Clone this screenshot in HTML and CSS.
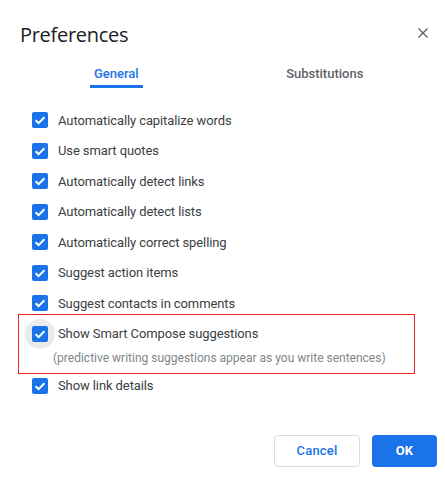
FILE: index.html
```html
<!DOCTYPE html>
<html>
<head>
<meta charset="utf-8">
<link rel="stylesheet" href="styles.css">
</head>
<body>
<div class="dialog">
  <div class="header">
    <h1 class="title">Preferences</h1>
    <button class="close" aria-label="Close">
      <svg width="10" height="10" viewBox="0 0 10 10"><path d="M0.5 0.5 L9.5 9.5 M9.5 0.5 L0.5 9.5" stroke="#5f6368" stroke-width="1.4" fill="none"/></svg>
    </button>
  </div>
  <div class="tabs">
    <div class="tab active"><span class="tab-label">General</span></div>
    <div class="tab"><span class="tab-label">Substitutions</span></div>
  </div>
  <div class="list">
    <div class="row"><span class="cb"><svg viewBox="0 0 16 16"><path d="M3.6 8.3 L6.6 11.1 L12.4 5.2"/></svg></span><span class="label">Automatically capitalize words</span></div>
    <div class="row"><span class="cb"><svg viewBox="0 0 16 16"><path d="M3.6 8.3 L6.6 11.1 L12.4 5.2"/></svg></span><span class="label">Use smart quotes</span></div>
    <div class="row"><span class="cb"><svg viewBox="0 0 16 16"><path d="M3.6 8.3 L6.6 11.1 L12.4 5.2"/></svg></span><span class="label">Automatically detect links</span></div>
    <div class="row"><span class="cb"><svg viewBox="0 0 16 16"><path d="M3.6 8.3 L6.6 11.1 L12.4 5.2"/></svg></span><span class="label">Automatically detect lists</span></div>
    <div class="row"><span class="cb"><svg viewBox="0 0 16 16"><path d="M3.6 8.3 L6.6 11.1 L12.4 5.2"/></svg></span><span class="label">Automatically correct spelling</span></div>
    <div class="row"><span class="cb"><svg viewBox="0 0 16 16"><path d="M3.6 8.3 L6.6 11.1 L12.4 5.2"/></svg></span><span class="label">Suggest action items</span></div>
    <div class="row"><span class="cb"><svg viewBox="0 0 16 16"><path d="M3.6 8.3 L6.6 11.1 L12.4 5.2"/></svg></span><span class="label">Suggest contacts in comments</span></div>
    <div class="highlight">
      <div class="row focus-row"><span class="cb focused"><svg viewBox="0 0 16 16"><path d="M3.6 8.3 L6.6 11.1 L12.4 5.2"/></svg></span><span class="label">Show Smart Compose suggestions</span></div>
      <div class="desc">(predictive writing suggestions appear as you write sentences)</div>
    </div>
    <div class="row"><span class="cb"><svg viewBox="0 0 16 16"><path d="M3.6 8.3 L6.6 11.1 L12.4 5.2"/></svg></span><span class="label">Show link details</span></div>
  </div>
  <div class="actions">
    <button class="btn cancel">Cancel</button>
    <button class="btn ok">OK</button>
  </div>
</div>
</body>
</html>
```
FILE: styles.css
```css
* { box-sizing: border-box; }
html, body { margin: 0; padding: 0; background: #fff; }
body { font-family: Roboto, "Liberation Sans", Arial, sans-serif; color: #3c4043; }

.dialog { width: 445px; height: 485px; }

.header {
  display: flex;
  align-items: center;
  justify-content: space-between;
  padding: 20px 12px 0 20px;
  height: 50px;
}
.title {
  margin: 0;
  font-family: "Open Sans", Roboto, sans-serif;
  font-weight: 400;
  font-size: 20px;
  line-height: 28px;
  color: #202124;
  letter-spacing: -0.3px;
}
.close {
  width: 20px; height: 20px;
  border: 0; background: none; padding: 0;
  display: flex; align-items: center; justify-content: center;
  margin-top: -5px;
}

.tabs {
  display: grid;
  grid-template-columns: 1fr 1fr;
  padding: 0 16px 0 12px;
  height: 38px;
}
.tab {
  display: flex;
  justify-content: center;
}
.tab-label {
  font-size: 13px;
  font-weight: 500;
  color: #5f6368;
  padding: 14px 4px 0;
  height: 38px;
  line-height: 20px;
  border-bottom: 3px solid transparent;
}
.tab.active .tab-label {
  color: #1a73e8;
  border-bottom-color: #1a73e8;
}

.list { padding: 16.75px 0 0 32px; }

.row {
  display: flex;
  align-items: center;
  gap: 10px;
  height: 30.5px;
}
.focus-row { position: relative; isolation: isolate; }
.cb {
  width: 16px; height: 16px;
  background: #1a73e8;
  border-radius: 2px;
  display: flex;
  position: relative;
  flex: none;
}
.cb svg { width: 16px; height: 16px; }
.cb path { fill: none; stroke: #fff; stroke-width: 2; }
.cb.focused::before {
  content: "";
  position: absolute;
  left: -7px; top: -7px;
  width: 30px; height: 30px;
  border-radius: 50%;
  background: #ebebeb;
  z-index: -1;
}
.label {
  font-size: 13px;
  color: #3c4043;
  letter-spacing: -0.1px;
}

.highlight {
  position: relative;
  padding-bottom: 4.5px;
}
.highlight::after {
  content: "";
  position: absolute;
  left: -14px;
  top: -4px;
  bottom: -3.5px;
  width: 395px;
  border: 1px solid #e8212a;
  pointer-events: none;
}
.desc {
  padding-left: 21px;
  font-size: 12px;
  line-height: 16px;
  color: #80868b;
  margin-top: 1px;
}

.actions {
  display: flex;
  justify-content: flex-end;
  gap: 12px;
  padding: 34px 8px 0 0;
}
.btn {
  height: 32px;
  border-radius: 4px;
  font-family: Roboto, sans-serif;
  font-size: 13px;
  font-weight: 500;
  letter-spacing: 0.2px;
}
.cancel {
  width: 86px;
  background: #fff;
  border: 1px solid #dadce0;
  color: #1a73e8;
}
.ok {
  width: 65px;
  background: #1a73e8;
  border: 0;
  color: #fff;
  font-weight: 700;
}
```
